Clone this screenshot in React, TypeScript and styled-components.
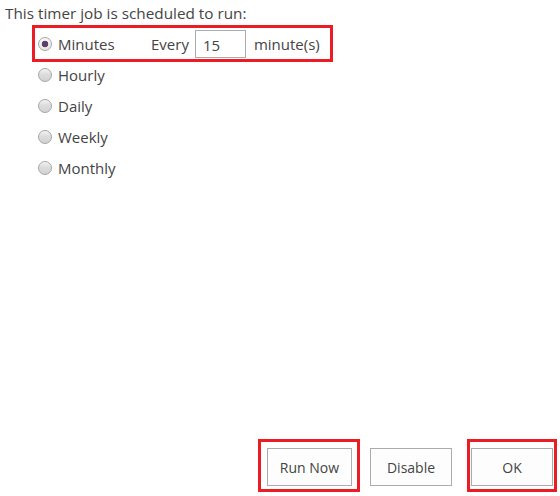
import { useState } from 'react'
import styled, { createGlobalStyle } from 'styled-components'

const GlobalStyle = createGlobalStyle`
  html, body {
    margin: 0;
    padding: 0;
    background: #ffffff;
  }
  body {
    font-family: "Open Sans", "Liberation Sans", sans-serif;
    color: #444444;
  }
`

const options = ['Minutes', 'Hourly', 'Daily', 'Weekly', 'Monthly']

const App = () => {
  const [schedule, setSchedule] = useState('Minutes')
  const [every, setEvery] = useState('15')

  return <Page>
    <GlobalStyle />
    <Heading>This timer job is scheduled to run:</Heading>
    <OptionList>
      {options.map(option => (
        <OptionRow key={option} $marked={option === 'Minutes'}>
          <Radio
            type="radio"
            name="schedule"
            checked={schedule === option}
            onChange={() => setSchedule(option)}
          />
          <Label $width={option === 'Minutes' ? 87 : undefined}>{option}</Label>
          {option === 'Minutes' && <>
            <Label>Every</Label>
            <EveryInput value={every} onChange={e => setEvery(e.target.value)} />
            <Label $gap={8}>minute(s)</Label>
          </>}
        </OptionRow>
      ))}
    </OptionList>
    <Footer>
      <Marked $pad="6px 5px 3px 6px">
        <Button>Run Now</Button>
      </Marked>
      <Button $plain>Disable</Button>
      <Marked $pad="6px 1px 3px 1px">
        <Button>OK</Button>
      </Marked>
    </Footer>
  </Page>
}

const Page = styled.main`
  box-sizing: border-box;
  min-height: 100vh;
  display: flex;
  flex-direction: column;
  font-size: 15px;
`

const Heading = styled.div`
  padding: 2px 0 0 5px;
  height: 26px;
  line-height: 22px;
  box-sizing: border-box;
  font-size: 15.3px;
`

const OptionList = styled.div`
  display: flex;
  flex-direction: column;
  padding-left: 35px;
  margin-top: 2px;
`

const OptionRow = styled.label<{ $marked?: boolean }>`
  display: flex;
  align-items: center;
  width: 295px;
  height: 31px;
  padding-left: 3px;
  box-sizing: border-box;
  outline: ${p => (p.$marked ? '3px solid #ec1c24' : 'none')};
`

const Radio = styled.input`
  appearance: none;
  margin: 0;
  width: 14px;
  height: 14px;
  border-radius: 50%;
  border: 1px solid #a6a6a6;
  box-sizing: border-box;
  background: linear-gradient(#f4f4f4 0%, #dcdcdc 45%, #d2d2d2 100%);
  flex-shrink: 0;
  &:checked {
    background: radial-gradient(circle, #5e3f6c 0, #5e3f6c 3px, transparent 3.6px),
      linear-gradient(#f7f7f7 0%, #e4e4e4 100%);
  }
`

const Label = styled.span<{ $width?: number, $gap?: number }>`
  margin-left: ${p => p.$gap ?? 6}px;
  width: ${p => (p.$width ? `${p.$width}px` : 'auto')};
  white-space: nowrap;
  line-height: 20px;
`

const EveryInput = styled.input`
  margin-left: 6px;
  width: 51px;
  height: 28px;
  box-sizing: border-box;
  border: 1px solid #ababab;
  padding: 3px 0 0 7px;
  font: inherit;
  color: #444444;
  outline: none;
`

const Footer = styled.div`
  margin-top: auto;
  display: flex;
  justify-content: flex-end;
  align-items: flex-end;
  gap: 10px;
  padding: 0 3px 4px 0;
`

const Marked = styled.div<{ $pad: string }>`
  display: flex;
  padding: ${p => p.$pad};
  border: 3px solid #ec1c24;
  & + button {
    margin-right: 5px;
  }
`

const Button = styled.button<{ $plain?: boolean }>`
  min-width: 82px;
  height: 38px;
  padding: 0 12px;
  border: 1px solid #ababab;
  background: #fdfdfd;
  color: #444444;
  font-family: inherit;
  font-size: 14px;
  margin-bottom: ${p => (p.$plain ? '6px' : '0')};
  cursor: pointer;
`

export default App
